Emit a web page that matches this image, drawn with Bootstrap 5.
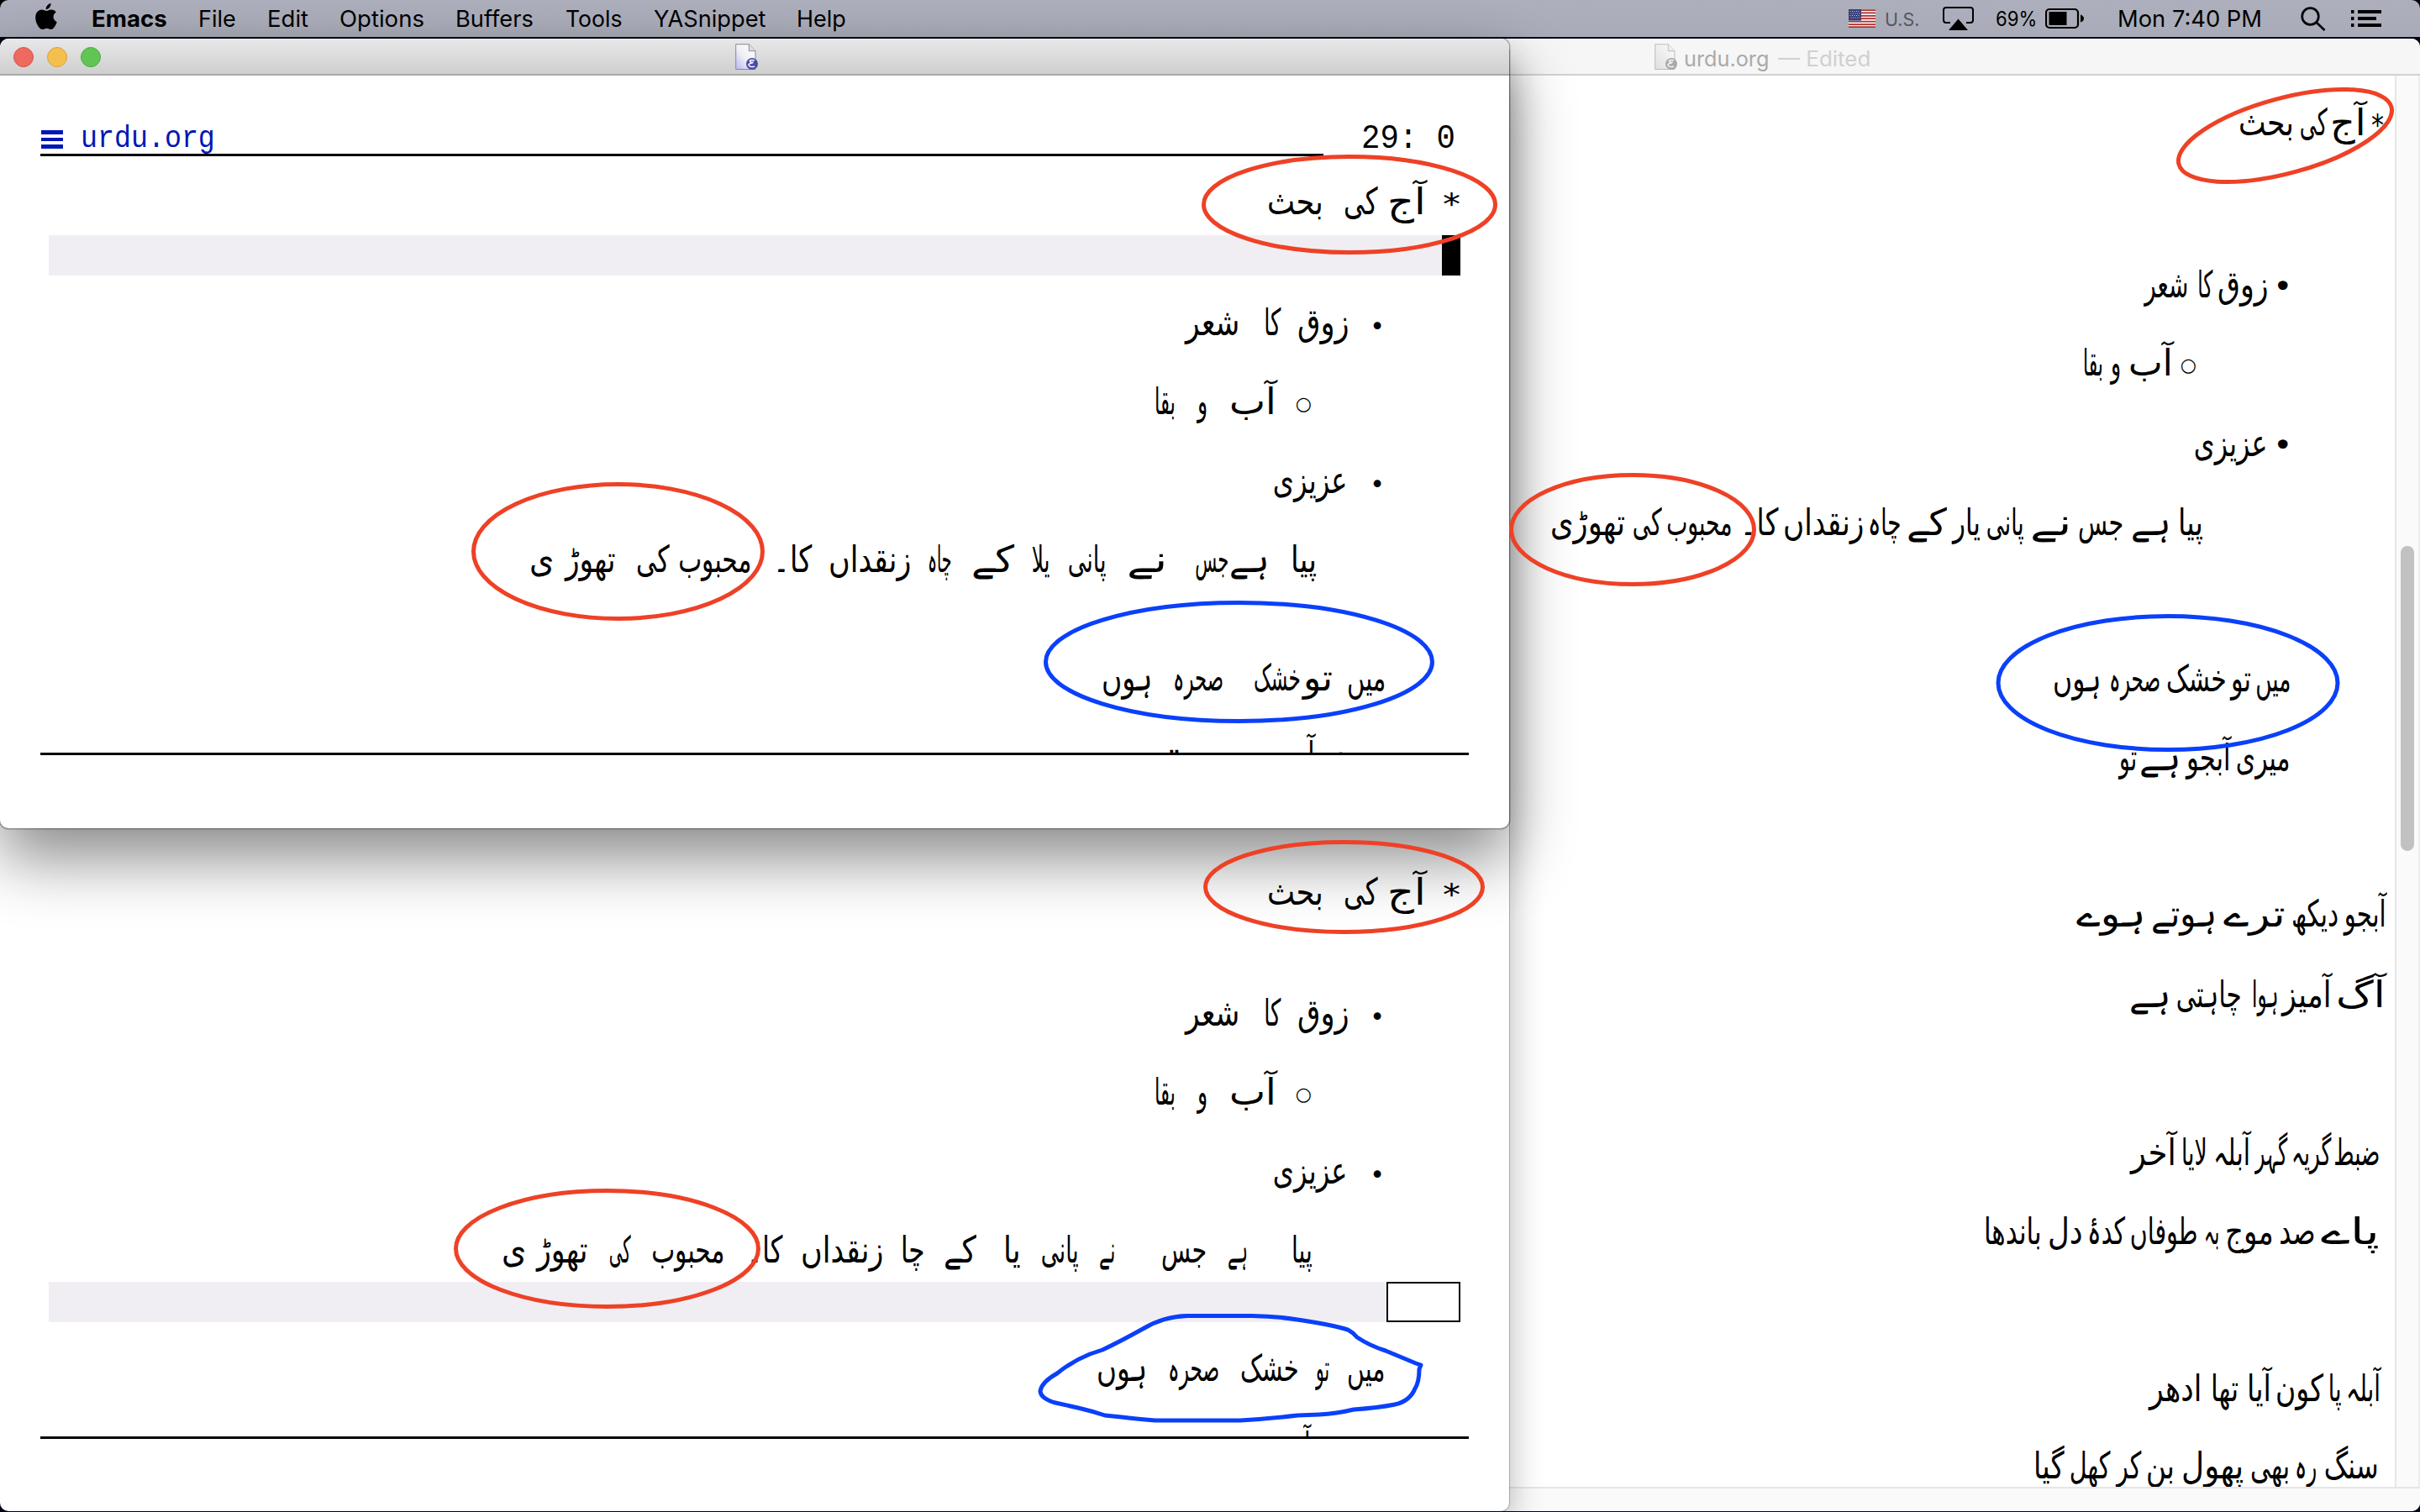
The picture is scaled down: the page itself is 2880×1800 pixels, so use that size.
<!DOCTYPE html>
<html lang="ur">
<head>
<meta charset="utf-8">
<title>urdu.org</title>
<link href="https://cdn.jsdelivr.net/npm/bootstrap@5.3.0/dist/css/bootstrap.min.css" rel="stylesheet">
<style>
html,body{width:2880px;height:1800px;overflow:hidden}
body{background:#04061a;font-family:Inter,"Liberation Sans",sans-serif;color:#000}
.desk{width:2880px;height:1800px;background:#04061a}
.topbar{height:44px;background:linear-gradient(#adb0bc,#a9acb8);border-radius:10px 10px 0 0;font-size:27px;line-height:46px}
.corner{height:44px;background:#000}
.win{background:#fff}
.w-right{left:1700px;top:46px;width:1180px;height:1753px;border-radius:0 10px 10px 10px}
.w-back{left:0;top:60px;width:1796px;height:1739px;border-radius:0 0 10px 10px;box-shadow:0 0 0 1px rgba(0,0,0,.22),0 14px 42px rgba(0,0,0,.3)}
.w-front{left:0;top:46px;width:1796px;height:940px;border-radius:10px;box-shadow:0 0 0 1.5px rgba(0,0,0,.28),0 36px 76px rgba(0,0,0,.46)}
.tbar{height:44px;border-radius:10px 10px 0 0}
.tb-active{background:linear-gradient(#e8e8e8,#cfcfcf);border-bottom:2px solid #a9a9a9}
.tb-idle{background:#f6f6f6;border-bottom:2px solid #d2d2d2;font-size:25.5px;line-height:47px}
.lamp{width:24px;height:24px;border-radius:50%;border:1px solid;margin-top:2px}
.lamp-r{background:#ee6a5f;border-color:#d5554b}.lamp-y{background:#f5bf4f;border-color:#d9a23c}.lamp-g{background:#61c554;border-color:#4fa843}
.fit{flex:none;white-space:nowrap;display:block}
.fit>span{display:inline-block;transform-origin:0 0}
[dir=rtl] .fit>span{transform-origin:100% 0}
.mono{font-family:"Liberation Mono",monospace}
.hdr{height:93px;margin-left:48px;width:1700px}
.hdr-line{height:3px;width:1527px;margin-left:48px;background:#000}
.burger i{display:block;width:26px;height:4.5px;background:#0017b5;margin-bottom:4.2px}
.blue{color:#0017b5}
.pane{overflow:hidden}
.script-row{display:flex;align-items:baseline;height:47px;font-family:"DejaVu Sans",sans-serif;font-size:44px;line-height:47px}
.script-row .fit{height:47px}
.g-dot{font-size:30px}.g-dotl{font-size:38px}
.g-ring{font-size:22px}.g-ring>span{margin-top:-5px;padding-bottom:5px}
.g-star{font-size:36px}
.g-star>span{padding-top:6px}
.hl{height:48px;margin-left:58px;background:#f0eef3}
.baseline{height:3px;width:1700px;margin-left:48px;background:#000}
.gutter{width:30px;background:#fafafa;border-left:2px solid #e6e6e6;border-right:2px solid #ececec}
.thumb{width:16px;height:363px;margin:560px 0 0 5px;border-radius:8px;background:#c1c1c1}
.foot{height:29px;background:#fafafa;border-top:2px solid #e6e6e6;border-radius:0 0 10px 0}
</style>
<script src="https://cdn.jsdelivr.net/npm/bootstrap@5.3.0/dist/js/bootstrap.bundle.min.js"></script>
</head>
<body>
<svg width="0" height="0" class="position-absolute"><defs>
<linearGradient id="pg" x1="1" y1="0" x2="0" y2="1"><stop offset="0" stop-color="#fff"/><stop offset=".55" stop-color="#f0f0f4"/><stop offset="1" stop-color="#b9b5fb"/></linearGradient>
<linearGradient id="pgg" x1="1" y1="0" x2="0" y2="1"><stop offset="0" stop-color="#fdfdfd"/><stop offset="1" stop-color="#dedede"/></linearGradient>
</defs></svg>
<div class="desk position-relative overflow-hidden">
 <div class="corner"><nav class="topbar d-flex">
  <svg data-x="42" data-w="26" width="26" height="44" viewBox="0 0 26 44"><path d="M18.6 4c.3 3.600-2.800 7.300-5.900 7.200C12.300 7.900 15.600 4.300 18.600 4zM13.300 13c1.400 0 3.100-1.600 5.800-1.500 2.400.1 4.500 1.200 5.700 3.100-4.800 3-4.100 9.500.9 11.600-1.200 3.600-4 8.700-7 8.800-2 0-2.800-1.300-5.100-1.300s-3.100 1.300-5 1.300C4.600 35 .2 27.200.2 21c0-6.100 3.700-9.400 7.300-9.500 2.500 0 4.300 1.500 5.800 1.500z"/></svg>
  <b data-x="109" data-w="90">Emacs</b><span data-x="236" data-w="45">File</span><span data-x="318" data-w="49">Edit</span><span data-x="404" data-w="101">Options</span><span data-x="542" data-w="93">Buffers</span><span data-x="673" data-w="68">Tools</span><span data-x="778" data-w="133">YASnippet</span><span data-x="948" data-w="59">Help</span>
  <svg data-x="2200" data-w="32" width="32" height="44" viewBox="0 0 32 44"><path fill="#f4f4f4" d="M0 11h32v22H0z"/><path stroke="#b0302f" stroke-width="1.75" d="M0 12h32M0 15.400h32M0 18.800h32M0 22.200h32M0 25.600h32M0 29h32M0 32.200h32"/><path fill="#3b3d78" d="M0 11h15v13.500H0z"/><path stroke="#c8cadf" stroke-width="1" stroke-dasharray="1 1.500" d="M1.500 13.500h12M2.500 16h11M1.500 18.500h12M2.500 21h11"/></svg>
  <span data-x="2243" data-w="41" style="color:#56585f;font-size:22px">U.S.</span>
  <svg data-x="2312" data-w="37" width="37" height="44" viewBox="0 0 37 44"><path d="M9 27H4q-3 0-3-3V12q0-3 3-3h29q3 0 3 3v12q0 3-3 3h-5" fill="none" stroke="#000" stroke-width="2"/><path d="M18.500 22.500 30 36H7z"/></svg>
  <span data-x="2375" data-w="49" style="font-size:24px">69%</span>
  <svg data-x="2434" data-w="47" width="47" height="44" viewBox="0 0 47 44"><rect x="1" y="11" width="38" height="22" rx="4" fill="none" stroke="#000" stroke-width="2.200"/><path d="M4.500 14h21v16h-21zM42 17.500q4 1.500 4 4.500t-4 4.500z"/></svg>
  <span data-x="2520" data-w="172">Mon 7:40 PM</span>
  <svg data-x="2738" data-w="30" width="30" height="44" viewBox="0 0 30 44"><g fill="none" stroke="#000" stroke-width="2.700"><circle cx="11.500" cy="19.500" r="9.800"/><path d="M18.500 26.500 28.500 36"/></g></svg>
  <svg data-x="2798" data-w="36" width="36" height="44" viewBox="0 0 36 44"><path stroke="#000" stroke-width="3.800" d="M0 14h3.500M8 14h28M0 22h3.500M8 22h22M0 30h3.500M8 30h28"/></svg>
 </nav></div>

 <section class="win w-right position-absolute d-flex flex-column">
  <div class="tbar tb-idle d-flex" data-origin="1700">
   <svg data-x="1969" data-w="28" width="28" height="42" viewBox="0 0 28 42"><path d="M.7 6.700h15.600l7.700 8V36.500H.7z" fill="url(#pgg)" stroke="#bdbdbd"/><path d="M16.300 6.700v8H24" fill="#eee" stroke="#bdbdbd"/><circle cx="20" cy="30" r="7" fill="#a9a9a9"/><path d="M23 26c-4-1-7 0-5 1.600 1.500 1.200 3 .4 3 .9s-6 1-5 3.300 5 1.900 7 1.200" fill="none" stroke="#f4f4f4" stroke-width="1.500"/></svg>
   <span data-x="2004" data-w="101" style="color:#aaa">urdu.org</span><span data-x="2116" data-w="110" style="color:#d0d0d0">— Edited</span>
  </div>
  <div class="d-flex flex-fill" style="min-height:0">
   <div class="pane flex-fill" dir="rtl" data-lines="right" data-top="90" data-edge="2850"></div>
   <div class="gutter"><div class="thumb"></div></div>
  </div>
  <div class="foot"></div>
 </section>

 <section class="win w-back position-absolute d-flex flex-column justify-content-end">
  <div class="pane" dir="rtl" style="height:720px" data-lines="back" data-top="990" data-edge="1796"></div>
  <div class="baseline"></div><div style="height:86px"></div>
 </section>

 <section class="win w-front position-absolute">
  <div class="tbar tb-active d-flex align-items-center position-relative">
   <div class="d-flex gap-3 ps-3"><i class="lamp lamp-r"></i><i class="lamp lamp-y"></i><i class="lamp lamp-g"></i></div>
   <svg style="margin-left:755px" width="28" height="42" viewBox="0 0 28 42"><path d="M.7 6.700h15.600l7.700 8V36.500H.7z" fill="url(#pg)" stroke="#8b8b93"/><path d="M16.300 6.700v8H24" fill="#ddd" stroke="#8b8b93"/><circle cx="20" cy="30" r="7" fill="#4a4aa8"/><path d="M23 26c-4-1-7 0-5 1.600 1.500 1.200 3 .4 3 .9s-6 1-5 3.300 5 1.900 7 1.200" fill="none" stroke="#f4f4ff" stroke-width="1.600"/></svg>
  </div>
  <div class="hdr d-flex mono" data-origin="48">
   <div class="burger" data-x="49" data-w="26" style="padding-top:65px"><i></i><i></i><i></i></div>
   <span class="blue" data-x="96" data-w="160" style="font-size:36px;padding-top:49px">urdu.org</span>
   <span data-x="1620" data-w="112" style="font-size:40px;padding-top:46px">29: 0</span>
  </div>
  <div class="hdr-line"></div>
  <div class="pane" dir="rtl" style="height:710px" data-lines="front" data-top="186" data-edge="1796"></div>
  <div class="baseline"></div>
 </section>

 <svg class="position-absolute top-0 start-0" width="2880" height="1800" fill="none" stroke-width="5" stroke-linejoin="round">
  <g stroke="#ee4126"><ellipse cx="1606" cy="243.500" rx="173.500" ry="57"/><ellipse cx="735.500" cy="656.500" rx="172" ry="80"/><ellipse cx="1599.500" cy="1056" rx="165" ry="53.500"/><ellipse cx="722.500" cy="1486.500" rx="180" ry="69"/><ellipse cx="2719.500" cy="161.500" rx="131" ry="44.700" transform="rotate(-15.100 2719.500 161.500)"/><ellipse cx="1943" cy="630.500" rx="144.500" ry="65"/></g>
  <g stroke="#0a40fa"><ellipse cx="1474.500" cy="788" rx="230" ry="70.500"/><ellipse cx="2580" cy="813" rx="202" ry="79.500"/>
  <path d="M1238 1656Q1240 1645 1258 1635Q1275 1621 1297 1612L1312 1607Q1335 1596 1360 1582Q1385 1567 1413 1566.500H1490Q1520 1567 1544 1571Q1585 1577 1604 1583Q1610 1586 1615 1592Q1630 1602 1649 1608L1685 1623L1691 1625L1689 1630Q1689 1645 1684 1653Q1678 1668 1660 1672Q1640 1676 1611 1678Q1590 1683 1570 1684L1544 1685Q1510 1689 1476 1691H1375Q1350 1689 1335 1687L1315 1685Q1300 1680 1283 1676L1254 1669.500Q1238 1664 1238 1656Z"/></g>
 </svg>
</div>
<script>
// Rows: [baseline, [text, left, right, glyph class?]...]; 'hl' is the current-line bar.
const heading = o => [
 [252+o,['*',1717,1738,'g-star'],['آج',1651,1697],['کی',1599,1640],['بحث',1508,1575]]];
const bullets = o => [
 [399+o,['•',1630,1648,'g-dot'],['زوق',1544,1606],['کا',1504,1524],['شعر',1411,1475]],
 [493+o,['○',1542,1561,'g-ring'],['آب',1463,1519],['و',1425,1437],['بقا',1374,1399]],
 [587+o,['•',1630,1648,'g-dot'],['عزیزی',1514,1603]]];
const docs = {
front:[...heading(0),['hl',280,1716,1738,'#000'],...bullets(0),
 [681,['پیا',1536,1567],['ہے',1463,1510],['جس',1422,1462],['نے',1341,1389],['پانی',1271,1317],['یلا',1227,1249],['کے',1156,1207],['چاہ',1104,1133],['زنقداں',986,1084],['کا۔',920,966],['محبوب',807,894],['کی',757,797],['تھوڑ',673,733],['ی',630,659]],
 [822,['میں',1603,1649],['تو',1551,1586],['خشک',1492,1548],['صحرہ',1396,1456],['ہوں',1311,1372]],
 [914,['میری',1579,1647],['آبجو',1513,1565],['ہے',1430,1480],['تو',1364,1404]]],
back:[...heading(822),...bullets(822),
 [1503,['پیا',1537,1562],['ہے',1461,1485],['جس',1382,1436],['نے',1308,1327],['پانی',1239,1284],['یا',1194,1215],['کے',1123,1162],['چا',1072,1101],['زنقداں',953,1051],['کا۔',889,931],['محبوب',775,862],['کی',725,751],['تھوڑ',639,700],['ی',597,626]],
 ['hl',1526,1650,1738,'#fff'],
 [1644,['میں',1603,1648],['تو',1566,1582],['خشک',1476,1546],['صحرہ',1390,1451],['ہوں',1305,1365]],
 [1736,['آبجو',1513,1560],['تو',1374,1404]]],
right:[
 [158,['*',2822,2837,'g-star'],['آج',2773,2816],['کی',2737,2770],['بحث',2664,2730]],
 [354,['•',2705,2728,'g-dotl'],['زوق',2639,2700],['کا',2615,2633],['شعر',2552,2604]],
 [447,['○',2595,2614,'g-ring'],['آب',2533,2586],['و',2512,2524],['بقا',2479,2503]],
 [543,['•',2705,2728,'g-dotl'],['عزیزی',2610,2698]],
 [637,['پیا',2592,2622],['ہے',2536,2583],['جس',2473,2527],['نے',2416,2465],['پانی',2364,2409],['یار',2324,2357],['کے',2269,2317],['چاہ',2223,2263],['زنقداں',2122,2218],['کا۔',2071,2116],['محبوب',1983,2061],['کی',1943,1978],['تھوڑی',1845,1934]],
 [823,['میں',2684,2726],['تو',2655,2679],['خشک',2578,2650],['صحرہ',2510,2571],['ہوں',2443,2501]],
 [917,['میری',2661,2726],['آبجو',2602,2655],['ہے',2546,2595],['تو',2522,2543]],
 [1103,['آبجو',2790,2840],['دیکھ',2727,2783],['ترے',2646,2720],['ہوتے',2560,2638],['ہوے',2471,2554]],
 [1199,['آگ',2780,2839],['آمیز',2716,2774],['ہوا',2680,2712],['چاہتی',2590,2668],['ہے',2534,2583]],
 [1387,['ضبط',2777,2832],['گریہ',2727,2774],['گہر',2684,2722],['آبلہ',2634,2678],['لایا',2596,2627],['آخر',2536,2590]],
 [1481,['پاے',2762,2832],['صد',2712,2755],['موج',2648,2706],['بہ',2623,2641],['طوفاں',2535,2616],['کدۂ',2484,2529],['دل',2437,2479],['باندھا',2361,2430]],
 [1668,['آبلہ',2792,2833],['پا',2771,2787],['کون',2708,2765],['آیا',2674,2703],['تھا',2631,2664],['ادھر',2558,2620]],
 [1760,['سنگ',2766,2831],['رہ',2731,2757],['بھی',2678,2725],['پھول',2596,2670],['بن',2554,2588],['کر',2519,2548],['کھل',2463,2512],['گیا',2420,2457]]]
};
// Squeeze or stretch a text to the advance it takes in its line.
function fit(el, w){
  const s = document.createElement('span');
  s.append(...el.childNodes); el.append(s); el.classList.add('fit');
  el.style.width = w+'px';
  s.style.transform = `scaleX(${w/s.offsetWidth})`;
  // raise the ring bullet to the middle of the letters
  if (el.classList.contains('g-ring')) s.style.transform += ' translateY(-5px)';
}
document.querySelectorAll('[data-lines]').forEach(p => {
  let y = +p.dataset.top;
  for (const row of docs[p.dataset.lines]) {
    const d = document.createElement('div');
    p.append(d);
    if (row[0] === 'hl') {
      d.className = 'hl d-flex'; d.style.marginTop = row[1]-y+'px'; d.style.marginRight = '58px';
      const c = document.createElement('div');
      c.style.cssText = `width:${row[3]-row[2]}px;background:${row[4]};border:2px solid #000`;
      d.append(c); y = row[1]+48; continue;
    }
    d.className = 'script-row';
    const t = row[0]-39;
    d.style.marginTop = t-y+'px'; y = t+47;
    let x = +p.dataset.edge;
    for (const [txt,l,r,cls] of row.slice(1)) {
      const e = document.createElement('span');
      if (cls) e.className = cls;
      e.textContent = txt; e.style.marginRight = x-r+'px'; d.append(e);
      fit(e, r-l); x = l;
    }
  }
});
document.querySelectorAll('.topbar,[data-origin]').forEach(bar => {
  let x = +(bar.dataset.origin||0);
  bar.querySelectorAll(':scope>[data-x]').forEach(e => {
    e.style.marginLeft = e.dataset.x-x+'px'; e.style.flex = 'none';
    if (e.tagName==='SPAN'||e.tagName==='B') fit(e, +e.dataset.w);
    x = +e.dataset.x + +e.dataset.w;
  });
});
</script>
</body>
</html>
